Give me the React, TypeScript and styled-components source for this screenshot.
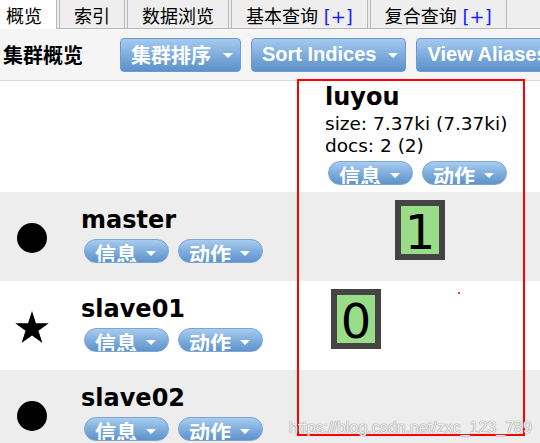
import React from "react";
import styled, { createGlobalStyle } from "styled-components";

const GlobalStyle = createGlobalStyle`
  html, body {
    margin: 0;
    padding: 0;
    background: #fff;
  }
  body {
    font-family: "DejaVu Sans", "Noto Sans CJK SC", sans-serif;
    overflow: hidden;
  }
  * {
    box-sizing: border-box;
  }
`;

const Page = styled.div`
  position: relative;
  width: 540px;
  height: 443px;
  overflow: hidden;
`;

const TabBar = styled.div`
  display: flex;
  align-items: flex-start;
  height: 29px;
  margin-left: -9px;
  background: #eee;
  border-bottom: 1px solid #b8b8b8;
`;

const Tab = styled.div<{ $active?: boolean }>`
  height: ${(p) => (p.$active ? 29 : 28)}px;
  margin-right: 2px;
  padding: 6px 14px 0;
  line-height: 22px;
  font-size: 18px;
  font-family: "DejaVu Sans", "Noto Sans CJK SC", sans-serif;
  color: #000;
  white-space: nowrap;
  background: ${(p) => (p.$active ? "#fff" : "#eee")};
  border-left: 1px solid #b8b8b8;
  border-right: 1px solid #b8b8b8;
`;

const Plus = styled.span`
  color: #1a1aff;
`;

const Toolbar = styled.div`
  display: flex;
  align-items: center;
  gap: 10px;
  height: 52px;
  padding-left: 3px;
  background: #f5f5f5;
  border-bottom: 1px solid #dcdcdc;
`;

const Title = styled.div`
  margin-right: 27px;
  font: bold 20px "Noto Sans CJK SC", sans-serif;
  color: #000;
  white-space: nowrap;
`;

const MenuButton = styled.div`
  display: flex;
  align-items: center;
  flex-shrink: 0;
  height: 34px;
  padding: 0 7px 0 10px;
  border: 1px solid #6b9bd0;
  border-radius: 4px;
  background: linear-gradient(to bottom, #a6caef 0%, #7eaddd 50%, #5d91c9 100%);
  color: #fff;
  font: bold 20px "Liberation Sans", "Noto Sans CJK SC", sans-serif;
  white-space: nowrap;
`;

const Caret = styled.span<{ $top?: number }>`
  flex-shrink: 0;
  width: 0;
  height: 0;
  margin-left: ${(p) => (p.$top !== undefined ? 9 : 12)}px;
  margin-top: ${(p) => p.$top ?? 2}px;
  border-left: 5px solid transparent;
  border-right: 5px solid transparent;
  border-top: 5px solid #fff;
`;

const Row = styled.div<{ $shade?: boolean; $height: number }>`
  display: grid;
  grid-template-columns: 64px 233px 1fr;
  height: ${(p) => p.$height}px;
  background: ${(p) => (p.$shade ? "#ededed" : "#fff")};
`;

const IconCell = styled.div`
  display: flex;
  align-items: center;
  justify-content: center;
  padding-top: 2px;
`;

const Dot = styled.div`
  width: 30px;
  height: 30px;
  border-radius: 50%;
  background: #000;
`;

const NodeCell = styled.div`
  padding: 14px 0 0 17px;
`;

const Name = styled.div`
  font: bold 24px/28px "DejaVu Sans", sans-serif;
  color: #000;
  white-space: nowrap;
`;

const ButtonRow = styled.div<{ $gap: number }>`
  display: flex;
  gap: 9px;
  margin: ${(p) => p.$gap}px 0 0 3px;
`;

const Pill = styled.div`
  display: flex;
  align-items: flex-start;
  height: 24px;
  overflow: hidden;
  padding: 3px 12px 0 10px;
  border: 1px solid #7aa6d6;
  border-radius: 12px;
  background: linear-gradient(to bottom, #a9ccef 0%, #80aedd 50%, #5f93cb 100%);
  color: #fff;
  font: bold 21px/21px "Noto Sans CJK SC", sans-serif;
  white-space: nowrap;
`;

const IndexHeader = styled.div`
  padding: 2px 0 0 28px;
`;

const Stat = styled.div<{ $first?: boolean }>`
  margin-top: ${(p) => (p.$first ? 2 : 0)}px;
  font: 18.5px/22px "DejaVu Sans", sans-serif;
  color: #000;
  white-space: nowrap;
`;

const ShardCell = styled.div`
  display: flex;
  align-items: flex-start;
  padding: 8px 0 0 34px;
`;

const Slot = styled.div`
  width: 64px;
  flex-shrink: 0;
`;

const Shard = styled.div`
  width: 50px;
  height: 60px;
  border: 6px solid #444;
  background: #99dd88;
  font: 48px/52px "DejaVu Sans", sans-serif;
  color: #000;
  text-align: center;
`;

const Annotation = styled.div`
  position: absolute;
  left: 297px;
  top: 79px;
  width: 228px;
  height: 357px;
  border: 2px solid #ff0000;
  pointer-events: none;
`;

const Speck = styled.div`
  position: absolute;
  left: 458px;
  top: 292px;
  width: 2px;
  height: 2px;
  background: #ff3030;
`;

const Watermark = styled.div`
  position: absolute;
  left: 289px;
  top: 419px;
  font: 16px "Liberation Sans", sans-serif;
  color: rgba(255, 255, 255, 0.9);
  text-shadow: 0 0 1px #8a8a8a, 0 0 1px #8a8a8a;
  white-space: nowrap;
`;

const Star = () => (
  <svg width="34" height="32" viewBox="0 0 100 95">
    <polygon
      points="50,0 61.8,36.3 100,36.3 69.1,58.8 80.9,95 50,72.6 19.1,95 30.9,58.8 0,36.3 38.2,36.3"
      fill="#000"
    />
  </svg>
);

const NodeButtons = ({ gap }: { gap: number }) => (
  <ButtonRow $gap={gap}>
    <Pill>
      信息
      <Caret $top={8} />
    </Pill>
    <Pill>
      动作
      <Caret $top={8} />
    </Pill>
  </ButtonRow>
);

type Node = {
  name: string;
  master: boolean;
  shards: (number | null)[];
};

const nodes: Node[] = [
  { name: "master", master: false, shards: [null, 1] },
  { name: "slave01", master: true, shards: [0] },
  { name: "slave02", master: false, shards: [] },
];

const tabs = ["概览", "索引", "数据浏览", "基本查询", "复合查询"];

export default function App() {
  return (
    <Page>
      <GlobalStyle />
      <TabBar>
        {tabs.map((t, i) => (
          <Tab key={t} $active={i === 0}>
            {t}
            {i >= 3 && <Plus> [+]</Plus>}
          </Tab>
        ))}
      </TabBar>
      <Toolbar>
        <Title>集群概览</Title>
        <MenuButton>
          集群排序
          <Caret />
        </MenuButton>
        <MenuButton>
          Sort Indices
          <Caret />
        </MenuButton>
        <MenuButton>
          View Aliases
          <Caret />
        </MenuButton>
      </Toolbar>
      <Row $height={111}>
        <div />
        <div />
        <IndexHeader>
          <Name>luyou</Name>
          <Stat $first>size: 7.37ki (7.37ki)</Stat>
          <Stat>docs: 2 (2)</Stat>
          <NodeButtons gap={4} />
        </IndexHeader>
      </Row>
      {nodes.map((n, i) => (
        <Row key={n.name} $height={89} $shade={i % 2 === 0}>
          <IconCell>{n.master ? <Star /> : <Dot />}</IconCell>
          <NodeCell>
            <Name>{n.name}</Name>
            <NodeButtons gap={5} />
          </NodeCell>
          <ShardCell>
            {n.shards.map((s, j) => (
              <Slot key={j}>{s !== null && <Shard>{s}</Shard>}</Slot>
            ))}
          </ShardCell>
        </Row>
      ))}
      <Annotation />
      <Speck />
      <Watermark>https://blog.csdn.net/zxc_123_789</Watermark>
    </Page>
  );
}
